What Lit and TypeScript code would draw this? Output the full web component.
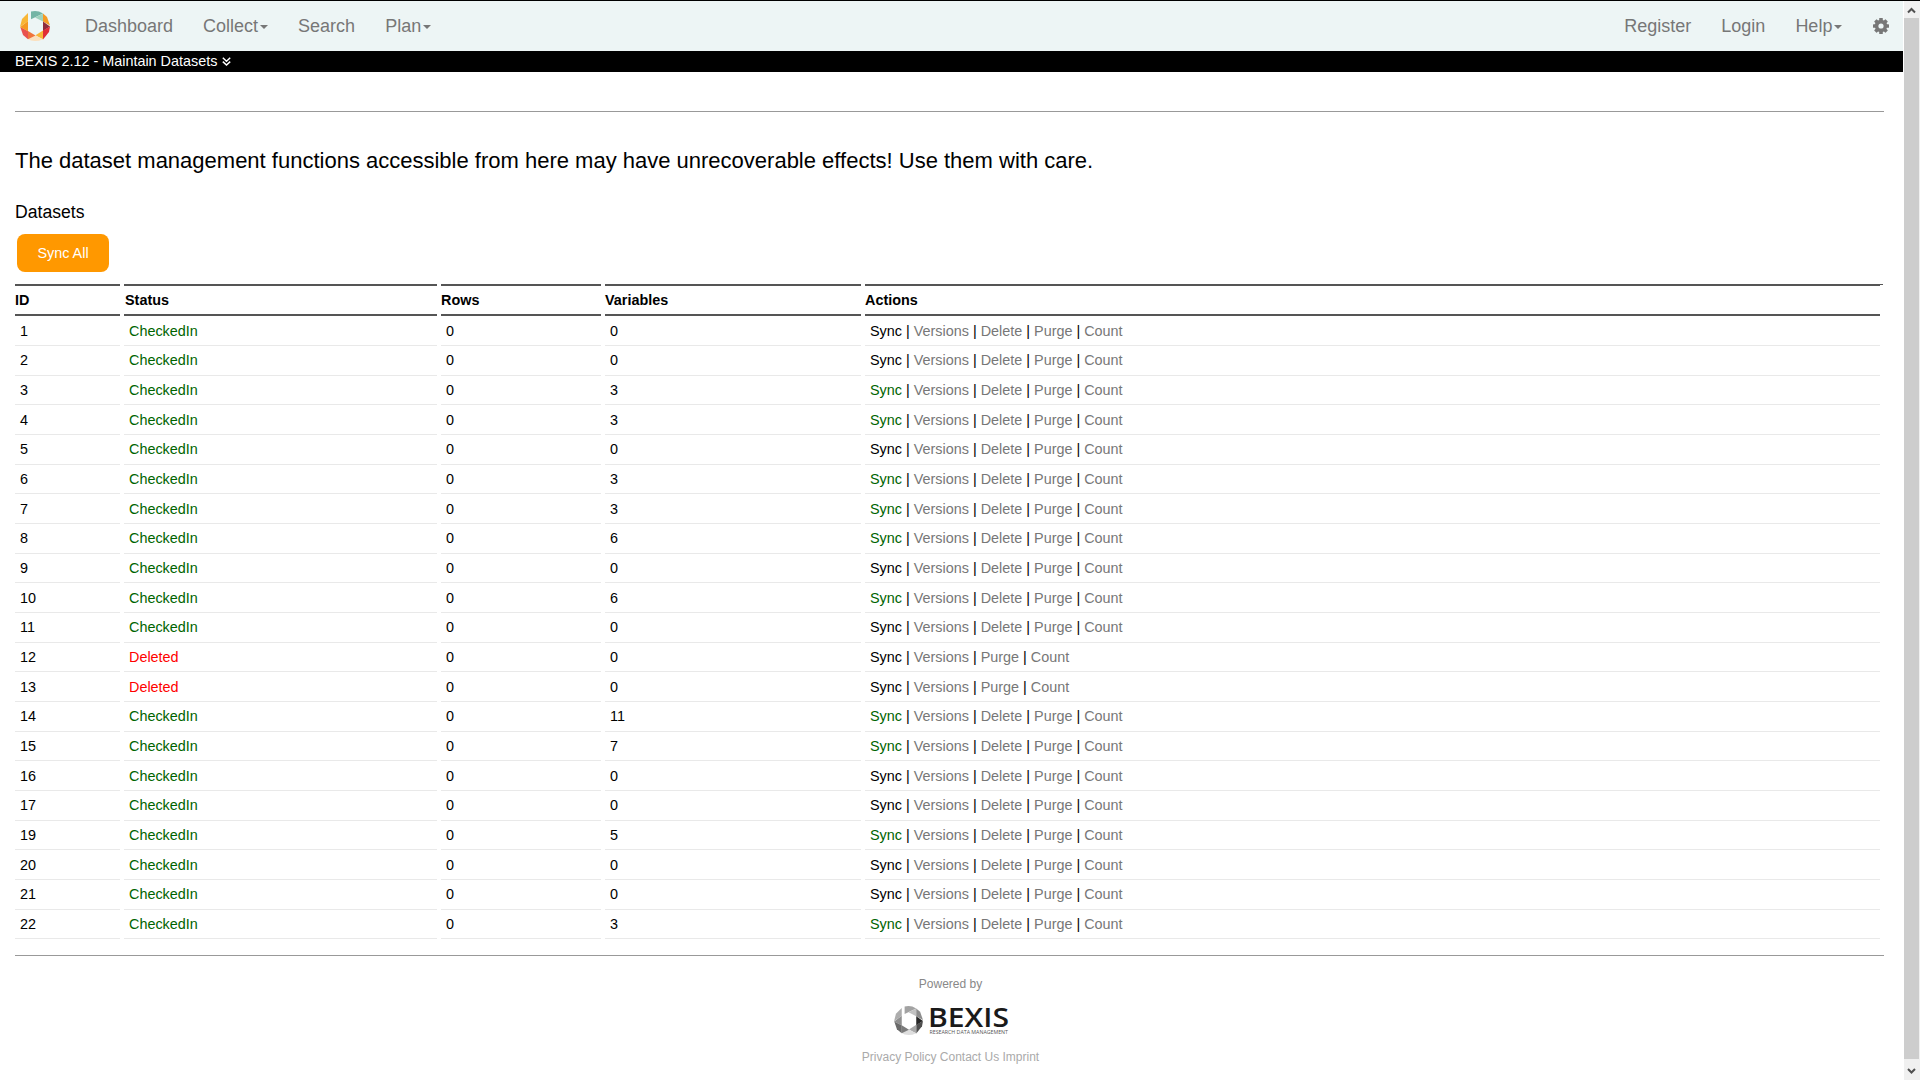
import { LitElement, html, css, svg } from "lit";
import { customElement, property } from "lit/decorators.js";

interface Dataset {
  id: number;
  deleted?: boolean;
  rows: number;
  variables: number;
}

const VARIABLES: Record<number, number> = { 3: 3, 4: 3, 6: 3, 7: 3, 8: 6, 10: 6, 14: 11, 15: 7, 19: 5, 22: 3 };
const DELETED = [12, 13];

const DATASETS: Dataset[] = Array.from({ length: 22 }, (_, i) => i + 1)
  .filter((id) => id !== 18)
  .map((id) => ({ id, deleted: DELETED.includes(id), rows: 0, variables: VARIABLES[id] ?? 0 }));

const COLOR_PALETTE = ["#74b5a5", "#9fd2bd", "#f59a23", "#8f2c3c", "#e02d35", "#f8b636", "#fbe0bd", "#f0743b", "#e8524f", "#f59a23", "#f8b636"];
const GREY_PALETTE = ["#a2a2a2", "#c2c2c2", "#8d8d8d", "#262626", "#4f4f4f", "#a9a9a9", "#dedede", "#7b7b7b", "#6a6a6a", "#8f8f8f", "#adadad"];

const FACETS = [
  "11,0.6 15,0 19,0.6 23,2.6 11,8.3",
  "23,2.6 23,10.5 15,6.4",
  "23,2.6 27,6 30,14.5 23,10.5",
  "23,10.5 30,15.5 23,20",
  "30,15.5 29,21 23,28.4 23,19.5",
  "23,19.5 23,28.4 15.5,24.3",
  "8,28 15,24.2 23,28.2 19,29.7 15,30 11,29.6",
  "8,20 15.5,24.5 8,28.2",
  "0.3,16 8,20 8,28.2 3,24",
  "8,10 8,20.2 0.1,16",
  "0.1,15.8 2,8 8,2 8,10.2",
];

@customElement("bexis-mark")
class BexisMark extends LitElement {
  @property({ type: Boolean }) grey = false;
  static styles = css`
    :host { display: block; }
    svg { display: block; width: 100%; height: 100%; }
  `;
  render() {
    const palette = this.grey ? GREY_PALETTE : COLOR_PALETTE;
    return html`<svg viewBox="0 0 30 30">${FACETS.map((p, i) => svg`<polygon points=${p} fill=${palette[i]}></polygon>`)}</svg>`;
  }
}

@customElement("app-root")
class AppRoot extends LitElement {
  static styles = css`
    :host {
      display: flex;
      width: 1920px;
      height: 1080px;
      overflow: hidden;
      background: #fff;
      color: #000;
      font: 14.4px/20px "Liberation Sans", Arial, sans-serif;
      box-sizing: border-box;
      border-top: 1px solid #000;
    }
    .page { width: 1903px; flex: none; }
    .nav {
      height: 50px;
      display: flex;
      align-items: center;
      background: #edf5f5;
      color: #777;
      font-size: 18px;
    }
    .brand { width: 30px; height: 30px; margin: 0 35px 0 20px; }
    .links { display: flex; align-items: center; gap: 30px; }
    .links.right { margin-left: auto; margin-right: 14px; }
    .links span { display: flex; align-items: center; }
    .caret {
      margin: 2px 0 0 2px;
      border: 4px solid transparent;
      border-top-color: #777;
      border-bottom: 0;
    }
    .gear { width: 16px; height: 16px; display: block; margin-left: 0.6px; }
    .bar {
      display: flex;
      align-items: center;
      height: 21px;
      box-sizing: border-box;
      padding: 0 15px 1px;
      gap: 5px;
      background: #000;
      color: #fff;
    }
    .bar svg { width: 9px; height: 9px; margin-top: 1px; }
    .content { padding: 0 19px 0 15px; }
    .rule { height: 1px; background: #999; }
    .rule.top { margin-top: 39px; }
    h1 { font-size: 22px; line-height: 26px; font-weight: 400; margin: 36px 0 0; }
    h2 { font-size: 17.6px; line-height: 20px; font-weight: 400; margin: 28px 0 0; }
    .sync-all {
      display: flex;
      align-items: center;
      justify-content: center;
      width: 92px;
      height: 38px;
      margin: 12px 0 12px 2px;
      border: 0;
      padding: 0;
      border-radius: 8px;
      background: #ff9800;
      color: #fff;
      font: inherit;
    }
    .row {
      display: grid;
      grid-template-columns: 105px 313px 160px 256px 1015px;
      column-gap: 4px;
      height: 29.66px;
    }
    .row > div { border-bottom: 1px solid #e9e9e9; padding: 4.4px 5px 0; white-space: pre; }
    .row.head { height: 32px; font-weight: 700; margin-bottom: 0.45px; }
    .row.head > div { border: solid #555; border-width: 2px 0; padding: 4px 0 0; }
    .row.head > .status { padding-left: 1px; }
    .row.head > .last { position: relative; }
    .row.head > .last::after {
      content: "";
      position: absolute;
      top: -2px;
      right: -3px;
      width: 3px;
      height: 1px;
      background: #555;
    }
    .ok { color: #006400; }
    .bad { color: #f00; }
    a { color: #777; }
    footer {
      display: flex;
      flex-direction: column;
      align-items: center;
      padding-left: 2px;
      font-size: 12px;
      color: #888;
    }
    .bottom { margin-top: 16px; }
    .powered { margin-top: 18px; line-height: 20px; }
    .logo { display: flex; gap: 6px; margin-top: 12px; height: 30px; }
    .logo bexis-mark { width: 29px; height: 29px; }
    .logo svg { width: 79px; height: 30px; display: block; overflow: visible; }
    .legal { color: #aaa; margin-top: 11px; line-height: 20px; }
    .scroll {
      margin-left: 1px;
      width: 16px;
      display: flex;
      flex-direction: column;
      background: #f0f0f0;
    }
    .scroll svg { width: 15px; height: 17px; display: block; }
    .thumb { width: 15px; height: 1041px; background: #cdcdcd; }
  `;

  private actions(d: Dataset) {
    const names = d.deleted ? ["Versions", "Purge", "Count"] : ["Versions", "Delete", "Purge", "Count"];
    return html`<span class=${d.variables ? "ok" : ""}>Sync</span>${names.map((n) => html` | <a>${n}</a>`)}`;
  }

  render() {
    const caret = html`<i class="caret"></i>`;
    return html`
      <div class="page">
        <nav class="nav">
          <bexis-mark class="brand"></bexis-mark>
          <div class="links">
            <span>Dashboard</span><span>Collect${caret}</span><span>Search</span><span>Plan${caret}</span>
          </div>
          <div class="links right">
            <span>Register</span><span>Login</span><span>Help${caret}</span>
            <svg class="gear" viewBox="0 0 16 16">
              <g fill="#777">
                ${[0, 45, 90, 135].map((r) => svg`<rect x="6.2" y="0" width="3.6" height="16" rx=".5" transform=${`rotate(${r} 8 8)`}></rect>`)}
                <circle cx="8" cy="8" r="6.2"></circle>
              </g>
              <circle cx="8" cy="8" r="2.6" fill="#edf5f5"></circle>
            </svg>
          </div>
        </nav>
        <div class="bar">
          <span>BEXIS 2.12 - Maintain Datasets</span>
          <svg viewBox="0 0 9 9"><path d="M.8 .8L4.5 4.2L8.2 .8M.8 4.6L4.5 8L8.2 4.6" fill="none" stroke="#fff" stroke-width="1.5"></path></svg>
        </div>
        <div class="content">
          <div class="rule top"></div>
          <h1>The dataset management functions accessible from here may have unrecoverable effects! Use them with care.</h1>
          <h2>Datasets</h2>
          <button class="sync-all">Sync All</button>
          <div class="row head">
            <div>ID</div><div class="status">Status</div><div>Rows</div><div>Variables</div><div class="last">Actions</div>
          </div>
          ${DATASETS.map(
            (d) => html`<div class="row">
              <div>${d.id}</div>
              <div class=${d.deleted ? "bad" : "ok"}>${d.deleted ? "Deleted" : "CheckedIn"}</div>
              <div>${d.rows}</div>
              <div>${d.variables}</div>
              <div>${this.actions(d)}</div>
            </div>`
          )}
          <div class="rule bottom"></div>
          <footer>
            <div class="powered">Powered by</div>
            <div class="logo">
              <bexis-mark grey></bexis-mark>
              <svg viewBox="0 0 79 30">
                <text x="-1" y="21" font-family="Open Sans, sans-serif" font-weight="600" font-size="27" textLength="81" lengthAdjust="spacingAndGlyphs" fill="#1a1a1a">BEXIS</text>
                <text x="0.5" y="28" font-family="Open Sans, sans-serif" font-size="5" textLength="78.5" lengthAdjust="spacingAndGlyphs" fill="#555">RESEARCH DATA MANAGEMENT</text>
              </svg>
            </div>
            <div class="legal">Privacy Policy Contact Us Imprint</div>
          </footer>
        </div>
      </div>
      <div class="scroll">
        <svg viewBox="0 0 15 17"><path d="M4 11.5L7.5 8L11 11.5" fill="none" stroke="#505050" stroke-width="2"></path></svg>
        <div class="thumb"></div>
        <svg viewBox="0 0 15 17"><path d="M4 10L7.5 13.5L11 10" fill="none" stroke="#505050" stroke-width="2"></path></svg>
      </div>
    `;
  }
}
